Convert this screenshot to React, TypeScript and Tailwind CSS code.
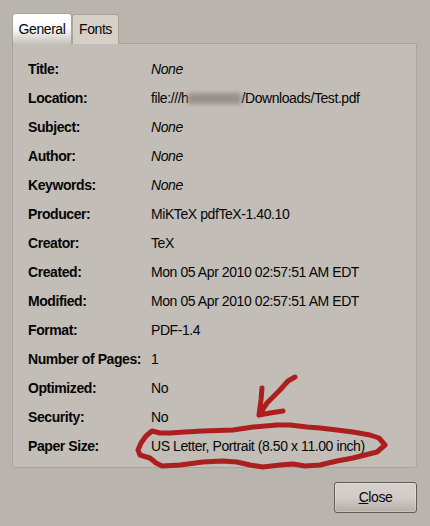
const rows: [string, string, boolean?][] = [
  ["Title:", "None", true],
  ["Location:", "file:///", false],
  ["Subject:", "None", true],
  ["Author:", "None", true],
  ["Keywords:", "None", true],
  ["Producer:", "MiKTeX pdfTeX-1.40.10"],
  ["Creator:", "TeX"],
  ["Created:", "Mon 05 Apr 2010 02:57:51 AM EDT"],
  ["Modified:", "Mon 05 Apr 2010 02:57:51 AM EDT"],
  ["Format:", "PDF-1.4"],
  ["Number of Pages:", "1"],
  ["Optimized:", "No"],
  ["Security:", "No"],
  ["Paper Size:", "US Letter, Portrait (8.50 x 11.00 inch)"],
];

const App = () => {
  return (
    <div className="relative w-[430px] h-[526px] overflow-hidden bg-[#b9b4ad] font-['Liberation_Sans',sans-serif] text-[14px] tracking-[-0.42px] text-[#060606] px-3 pt-[13px]">
      {/* Tabs */}
      <div className="flex items-end h-[31px] relative z-10">
        <div className="w-[60px] h-[31px] rounded-t-[3px] border border-b-0 border-[#a8a39b] bg-gradient-to-b from-[#ffffff] via-[#fafafa] to-[#c6c1bb] flex items-center justify-center">
          General
        </div>
        <div className="w-[47px] h-[30px] rounded-t-[3px] border border-b-0 border-[#a8a39b] bg-[#d6cfc6] flex items-center justify-center">
          Fonts
        </div>
      </div>

      {/* Panel */}
      <div className="w-[405px] h-[425px] -mt-px rounded-b-[3px] border border-[#a8a39b] bg-[#c2bdb7] pl-[15px] pt-[11px]">
        {rows.map(([label, value, italic]) => (
          <div key={label} className="flex items-center h-[29px]">
            <div className="w-[123px] font-bold">{label}</div>
            {label === "Location:" ? (
              <div className="flex items-center">
                file:///h
                <span className="w-[53px] h-[11px] bg-[#95918d] blur-[2px]" />
                /Downloads/Test.pdf
              </div>
            ) : (
              <div className={italic ? "italic" : ""}>{value}</div>
            )}
          </div>
        ))}
      </div>

      {/* Buttons */}
      <div className="flex justify-end pr-[1px] pt-[14px]">
        <button className="w-[83px] h-[31px] rounded-[3px] border border-[#5f5b57] bg-gradient-to-b from-[#d6cfcb] via-[#d2cbc7] to-[#b3aca7] shadow-[inset_0_0_0_1px_rgba(255,255,255,0.25)] text-center">
          <span className="underline">C</span>lose
        </button>
      </div>

      {/* Red marker scribble */}
      <svg className="absolute left-0 top-0" width="430" height="526" viewBox="0 0 430 526" fill="none">
        <g stroke="#ad1f1f" strokeLinecap="round" strokeLinejoin="round">
          <path strokeWidth="5" d="M295 377 L288 381 L280 390 L267 403 L259 415 M262 388 L261 400 L259 415 L270 413 L283 411" />
          <path strokeWidth="5" d="M152 431 L146 436 L141 443 L138 450 L140 455 L150 458 L156 463 L162 466 L180 465 L203 462 L222 461 L237 462 L250 465 L263 467 L280 465 L293 464 L305 466 L320 465 L337 461 L353 458 L377 452 L385 445 L379 438 L370 435 L353 432 L337 430 L320 428 L307 427 L290 425 L277 425 L253 427 L233 430 L203 431 L185 432 L170 433 L160 433 Z" />
        </g>
      </svg>
    </div>
  );
};

export default App;
